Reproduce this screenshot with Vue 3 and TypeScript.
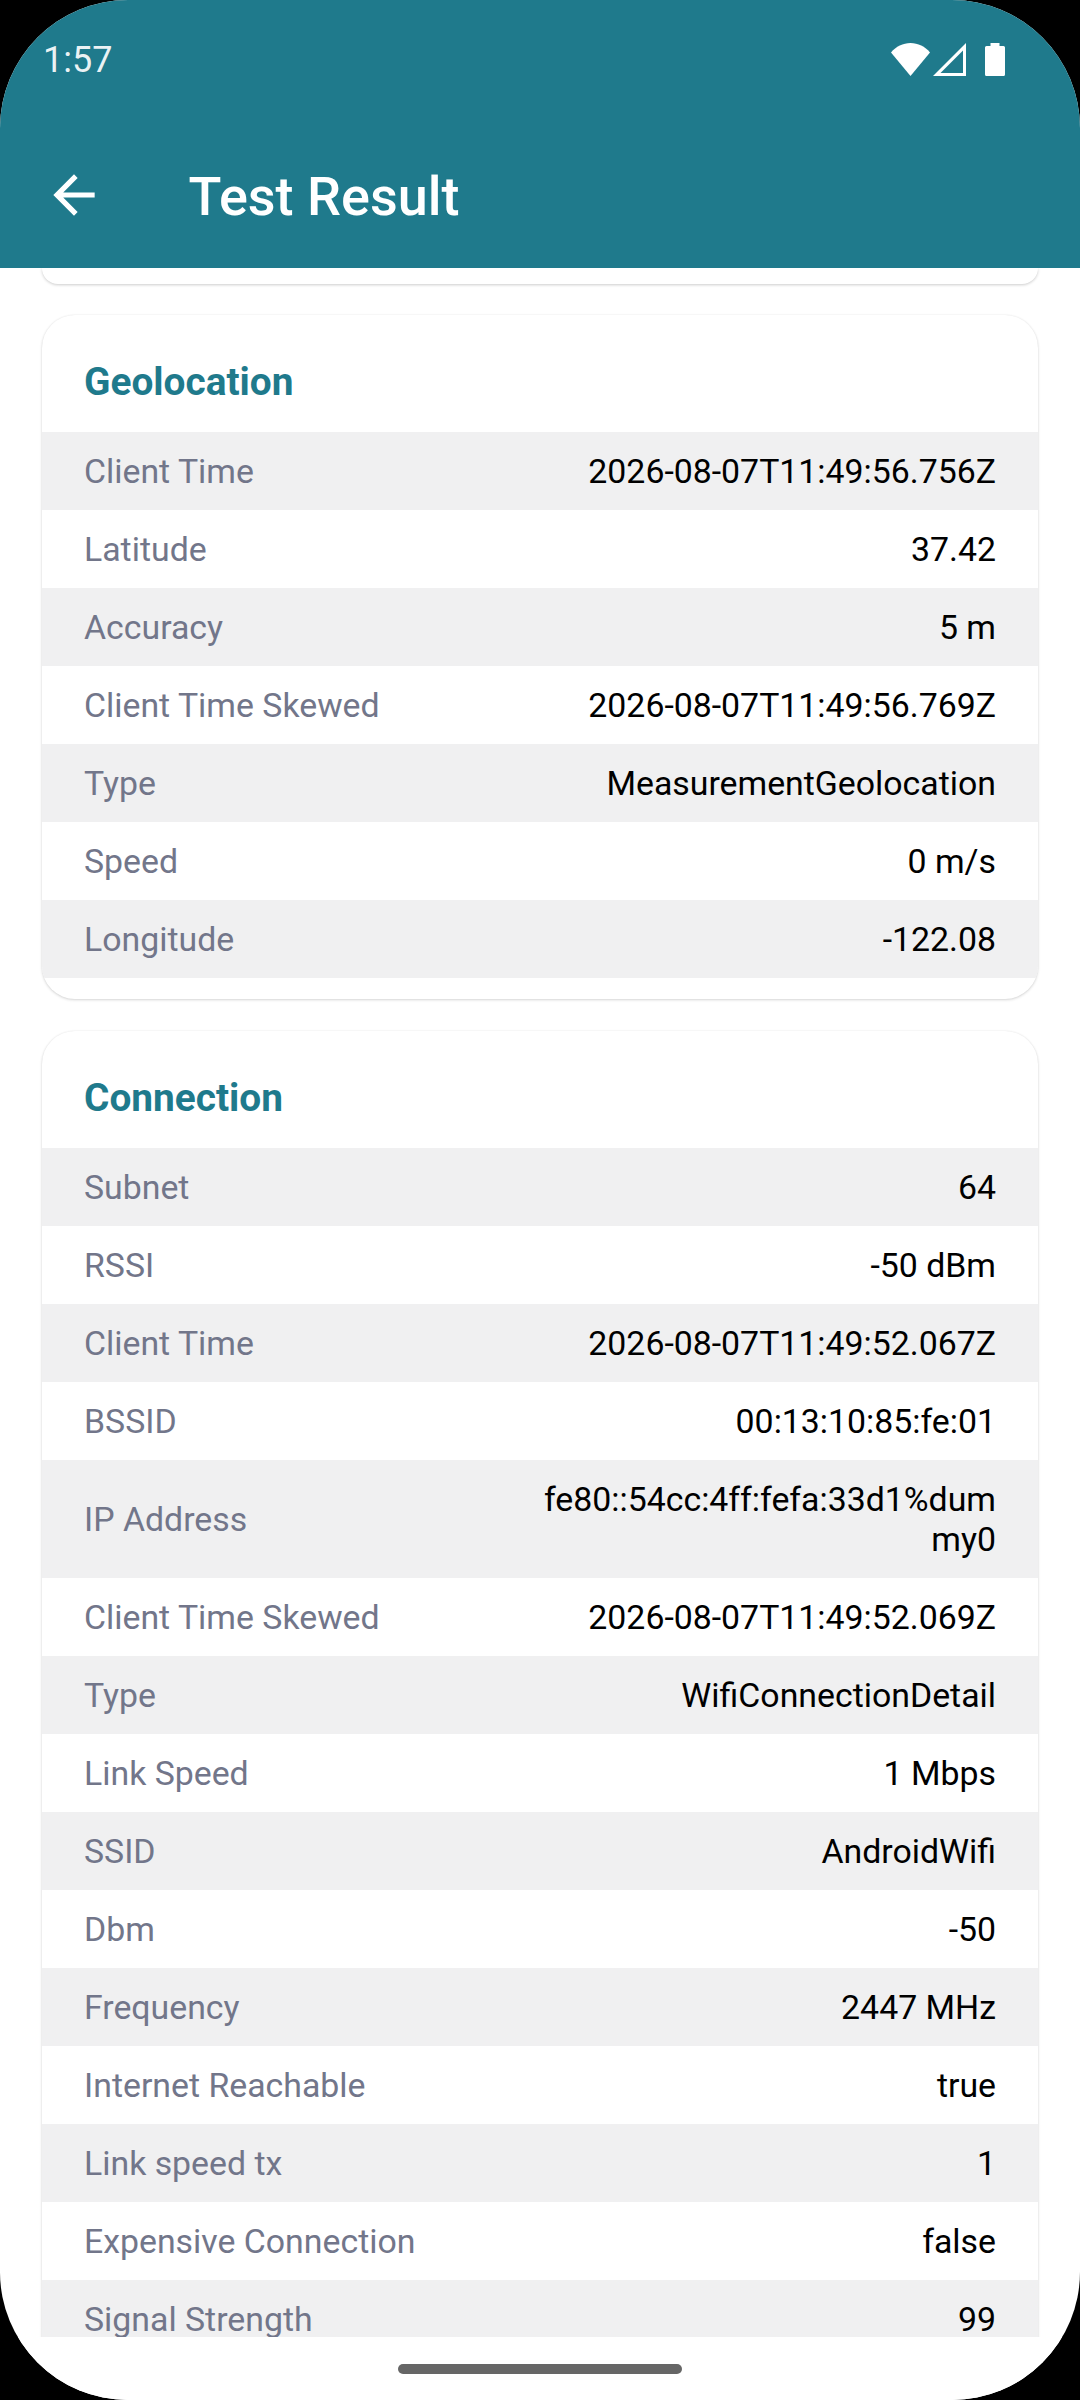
<script setup lang="ts">
interface Row { label: string; value: string }
interface Card { title: string; rows: Row[] }

const geolocation: Card = {
  title: 'Geolocation',
  rows: [
    { label: 'Client Time', value: '2026-08-07T11:49:56.756Z' },
    { label: 'Latitude', value: '37.42' },
    { label: 'Accuracy', value: '5 m' },
    { label: 'Client Time Skewed', value: '2026-08-07T11:49:56.769Z' },
    { label: 'Type', value: 'MeasurementGeolocation' },
    { label: 'Speed', value: '0 m/s' },
    { label: 'Longitude', value: '-122.08' },
  ],
}
const connection: Card = {
  title: 'Connection',
  rows: [
    { label: 'Subnet', value: '64' },
    { label: 'RSSI', value: '-50 dBm' },
    { label: 'Client Time', value: '2026-08-07T11:49:52.067Z' },
    { label: 'BSSID', value: '00:13:10:85:fe:01' },
    { label: 'IP Address', value: 'fe80::54cc:4ff:fefa:33d1%dummy0' },
    { label: 'Client Time Skewed', value: '2026-08-07T11:49:52.069Z' },
    { label: 'Type', value: 'WifiConnectionDetail' },
    { label: 'Link Speed', value: '1 Mbps' },
    { label: 'SSID', value: 'AndroidWifi' },
    { label: 'Dbm', value: '-50' },
    { label: 'Frequency', value: '2447 MHz' },
    { label: 'Internet Reachable', value: 'true' },
    { label: 'Link speed tx', value: '1' },
    { label: 'Expensive Connection', value: 'false' },
    { label: 'Signal Strength', value: '99' },
  ],
}
const cards: Card[] = [geolocation, connection]
</script>

<template>
  <div class="screen">
    <header class="appbar">
      <div class="status">
        <span class="time">1:57</span>
        <div class="status-icons">
          <svg class="wifi" width="39" height="33" viewBox="0 0 39 33"><path d="M19.5 33 0 9.500C5 3.500 12 0 19.5 0S34 3.500 39 9.500z" fill="#fff" /></svg>
          <svg class="signal" width="33" height="33" viewBox="0 0 33 33"><path d="M33 0V33H0ZM30 7.500 7.500 30H30Z" fill="#fff" fill-rule="evenodd" /></svg>
          <svg class="battery" width="20" height="33" viewBox="0 0 20 33"><path d="M5.500 0h9v3h4a1.500 1.500 0 0 1 1.500 1.500V31.500a1.500 1.500 0 0 1-1.500 1.500H1.500A1.500 1.500 0 0 1 0 31.500V4.500A1.500 1.500 0 0 1 1.500 3h4z" fill="#fff" /></svg>
        </div>
      </div>
      <div class="toolbar">
        <svg class="back" width="62" height="62" viewBox="0 0 24 24"><path d="M20 11H7.830l5.590-5.590L12 4l-8 8 8 8 1.410-1.410L7.830 13H20v-2z" fill="#fff" /></svg>
        <h1 class="title">Test Result</h1>
      </div>
    </header>

    <main class="scroller">
      <div class="prev-card"></div>
      <section v-for="card in cards" :key="card.title" class="card">
        <h2 class="card-title">{{ card.title }}</h2>
        <div v-for="row in card.rows" :key="row.label" class="row">
          <span class="label">{{ row.label }}</span>
          <span class="value">{{ row.value }}</span>
        </div>
      </section>
    </main>

    <footer class="navbar"><div class="handle"></div></footer>
  </div>
</template>

<style>
html, body { background: #000; margin: 0; }
</style>

<style scoped>
.screen {
  width: 1080px;
  height: 2400px;
  display: flex;
  flex-direction: column;
  background: #fff;
  border-radius: 128px;
  overflow: hidden;
  font-family: Roboto, "Liberation Sans", sans-serif;
}
.appbar {
  flex: 0 0 268px;
  background: #1f7a8c;
  color: #fff;
  position: relative;
  z-index: 1;
  display: flex;
  flex-direction: column;
}
.status {
  height: 120px;
  padding: 0 75px 0 43px;
  box-sizing: border-box;
  display: flex;
  justify-content: space-between;
  align-items: flex-start;
}
.time {
  font-size: 36px;
  line-height: 42px;
  margin-top: 39px;
  color: rgba(255, 255, 255, 0.92);
}
.status-icons {
  margin-top: 43px;
  display: flex;
  align-items: flex-start;
}
.wifi { margin-right: 3px; }
.signal { margin-right: 19px; }
.toolbar {
  display: flex;
  align-items: center;
  padding-left: 43px;
  margin-top: 43px;
  height: 64px;
}
.title {
  margin: 3px 0 0 83.500px;
  font-size: 54px;
  line-height: 64px;
  font-weight: 500;
}
.scroller {
  flex: 1 1 0;
  min-height: 0;
  overflow: hidden;
  display: flex;
  flex-direction: column;
  gap: 32px;
  padding: 0 42px;
}
.prev-card {
  flex: 0 0 16px;
  margin-bottom: -1px;
  background: #fff;
  border-radius: 0 0 33px 33px;
  box-shadow: 0 1px 3px rgba(0, 0, 0, 0.2);
}
.card {
  flex: 0 0 auto;
  background: #fff;
  border-radius: 33px;
  overflow: hidden;
  padding-bottom: 21.500px;
  box-shadow: 0 1px 3px rgba(0, 0, 0, 0.16), 0 0 2px rgba(0, 0, 0, 0.06);
}
.card-title {
  margin: 0;
  height: 116.500px;
  box-sizing: border-box;
  padding: 45px 42px 0;
  font-size: 38.800px;
  line-height: 44px;
  font-weight: 700;
  color: #1f7a8c;
}
.row {
  display: flex;
  justify-content: space-between;
  align-items: center;
  min-height: 78px;
  padding: 20px 42px 18px;
  box-sizing: border-box;
  font-size: 33.850px;
  line-height: 40px;
}
.row:nth-child(even) { background: #f0f0f1; }
.label { color: #72768a; flex: 0 0 auto; }
.value {
  color: #000;
  max-width: 470px;
  text-align: right;
  word-break: break-all;
}
.navbar {
  flex: 0 0 63px;
  display: flex;
  justify-content: center;
  align-items: flex-start;
  padding-top: 27px;
  box-sizing: border-box;
  background: #fff;
  position: relative;
}
.handle {
  width: 284px;
  height: 10px;
  border-radius: 5px;
  background: #666;
}
</style>
